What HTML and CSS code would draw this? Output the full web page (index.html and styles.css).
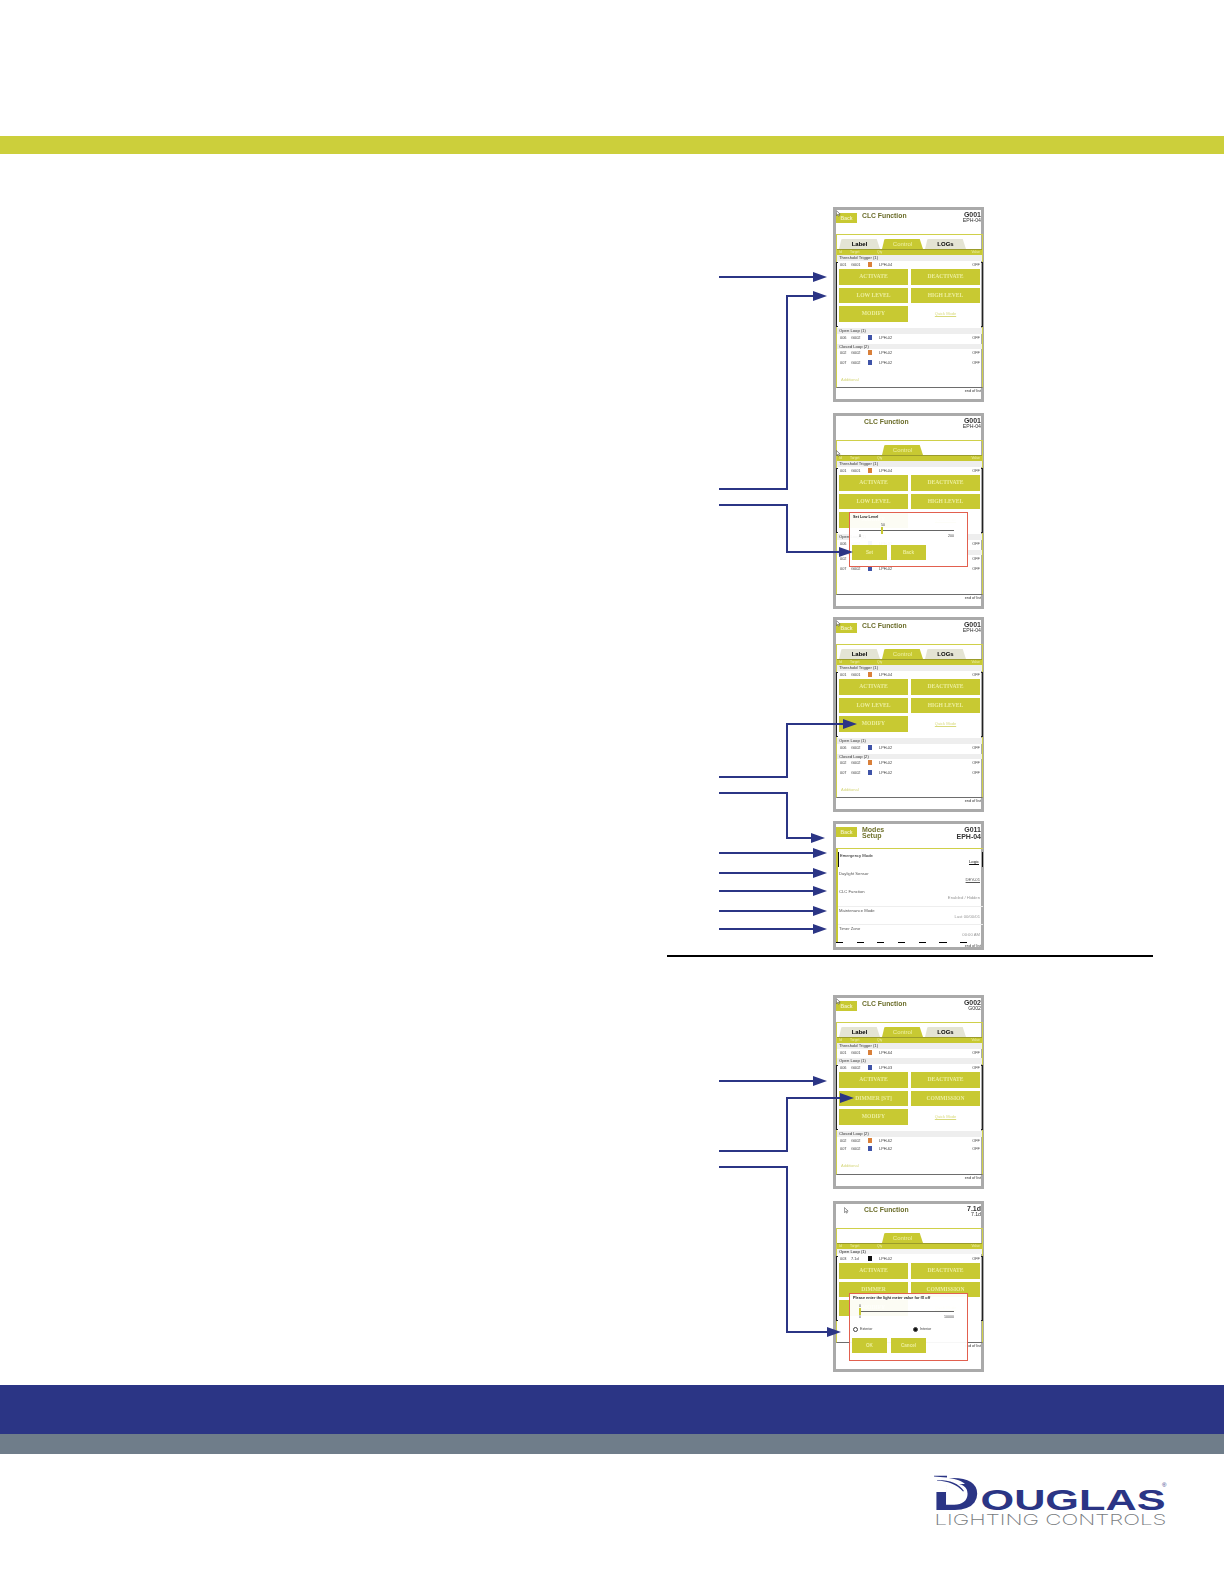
FILE: index.html
```html
<!DOCTYPE html>
<html>

<head>
	<title>CLC Function</title>

	<link rel="stylesheet" href="styles.css">
</head>

<body>
	<div class="page">
		<div class="olive-band"></div>

		<main class="screens">
			<section class="screen screen-first">
				<div class="screen-head">
					<span class="back">Back</span>
					<div class="title">CLC Function</div>
					<div class="device"><b>G001</b><span>EPH-04</span></div>
				</div>
				<div class="screen-body">
					<div class="tabs">
						<span class="tab">Label</span>
						<span class="tab tab-on">Control</span>
						<span class="tab">LOGs</span>
					</div>
					<div class="col-head"><span class="c-id">Id</span><span class="c-target">Target</span><span class="c-qty">Qty</span><span class="c-val">Value</span></div>
					<div class="group">Threshold Trigger (1)</div>
					<div class="selected">
						<div class="row"><span class="c-id">001</span><span class="c-target">G001</span><i class="swatch orange"></i><span class="c-type">LPH-04</span><span class="c-val">OFF</span></div>
						<div class="btn-grid">
							<span class="btn">ACTIVATE</span>
							<span class="btn">DEACTIVATE</span>
							<span class="btn">LOW LEVEL</span>
							<span class="btn">HIGH LEVEL</span>
							<span class="btn">MODIFY</span>
							<span class="link">Quick Mode</span>
						</div>
					</div>
					<div class="group">Open Loop (1)</div>
					<div class="row"><span class="c-id">006</span><span class="c-target">G002</span><i class="swatch blue"></i><span class="c-type">LPH-02</span><span class="c-val">OFF</span></div>
					<div class="group group-gap">Closed Loop (2)</div>
					<div class="row"><span class="c-id">002</span><span class="c-target">G002</span><i class="swatch orange"></i><span class="c-type">LPH-02</span><span class="c-val">OFF</span></div>
					<div class="row row-gap"><span class="c-id">007</span><span class="c-target">G002</span><i class="swatch blue"></i><span class="c-type">LPH-02</span><span class="c-val">OFF</span></div>
					<div class="add">Additional</div>
				</div>
				<div class="screen-foot">end of list</div>
				<svg class="cursor" viewBox="0 0 6 8"><path d="M.5.5v6l1.5-1.3 1 2 1-.5-1-2h2z" /></svg>
			</section>

			<section class="screen screen-second">
				<div class="screen-head">
					<div class="title title-noback">CLC Function</div>
					<div class="device"><b>G001</b><span>EPH-04</span></div>
				</div>
				<div class="screen-body">
					<div class="tabs">
						<span class="tab tab-hide">Label</span>
						<span class="tab tab-on">Control</span>
						<span class="tab tab-hide">LOGs</span>
					</div>
					<div class="col-head"><span class="c-id">Id</span><span class="c-target">Target</span><span class="c-qty">Qty</span><span class="c-val">Value</span></div>
					<div class="group">Threshold Trigger (1)</div>
					<div class="selected">
						<div class="row"><span class="c-id">001</span><span class="c-target">G001</span><i class="swatch orange"></i><span class="c-type">LPH-04</span><span class="c-val">OFF</span></div>
						<div class="btn-grid">
							<span class="btn">ACTIVATE</span>
							<span class="btn">DEACTIVATE</span>
							<span class="btn">LOW LEVEL</span>
							<span class="btn">HIGH LEVEL</span>
							<span class="btn">MODIFY</span>
							<span class="link">Quick Mode</span>
						</div>
					</div>
					<div class="group">Open Loop (1)</div>
					<div class="row"><span class="c-id">006</span><span class="c-target">G002</span><i class="swatch blue"></i><span class="c-type">LPH-02</span><span class="c-val">OFF</span></div>
					<div class="group group-gap">Closed Loop (2)</div>
					<div class="row"><span class="c-id">002</span><span class="c-target">G002</span><i class="swatch orange"></i><span class="c-type">LPH-02</span><span class="c-val">OFF</span></div>
					<div class="row row-gap"><span class="c-id">007</span><span class="c-target">G002</span><i class="swatch blue"></i><span class="c-type">LPH-02</span><span class="c-val">OFF</span></div>
				</div>
				<div class="screen-foot">end of list</div>
				<svg class="cursor cursor-mid" viewBox="0 0 6 8"><path d="M.5.5v6l1.5-1.3 1 2 1-.5-1-2h2z" /></svg>
				<div class="popup popup-low">
					<div class="popup-title">Set Low Level</div>
					<div class="slider">
						<span class="slider-val slider-val-mid">50</span>
						<div class="slider-track"><i class="slider-thumb thumb-mid"></i></div>
						<div class="slider-ends"><span>0</span><span>200</span></div>
					</div>
					<div class="popup-btns"><span class="btn">Set</span><span class="btn">Back</span></div>
				</div>
			</section>

			<section class="screen screen-third">
				<div class="screen-head">
					<span class="back">Back</span>
					<div class="title">CLC Function</div>
					<div class="device"><b>G001</b><span>EPH-04</span></div>
				</div>
				<div class="screen-body">
					<div class="tabs">
						<span class="tab">Label</span>
						<span class="tab tab-on">Control</span>
						<span class="tab">LOGs</span>
					</div>
					<div class="col-head"><span class="c-id">Id</span><span class="c-target">Target</span><span class="c-qty">Qty</span><span class="c-val">Value</span></div>
					<div class="group">Threshold Trigger (1)</div>
					<div class="selected">
						<div class="row"><span class="c-id">001</span><span class="c-target">G001</span><i class="swatch orange"></i><span class="c-type">LPH-04</span><span class="c-val">OFF</span></div>
						<div class="btn-grid">
							<span class="btn">ACTIVATE</span>
							<span class="btn">DEACTIVATE</span>
							<span class="btn">LOW LEVEL</span>
							<span class="btn">HIGH LEVEL</span>
							<span class="btn">MODIFY</span>
							<span class="link">Quick Mode</span>
						</div>
					</div>
					<div class="group">Open Loop (1)</div>
					<div class="row"><span class="c-id">006</span><span class="c-target">G002</span><i class="swatch blue"></i><span class="c-type">LPH-02</span><span class="c-val">OFF</span></div>
					<div class="group group-gap">Closed Loop (2)</div>
					<div class="row"><span class="c-id">002</span><span class="c-target">G002</span><i class="swatch orange"></i><span class="c-type">LPH-02</span><span class="c-val">OFF</span></div>
					<div class="row row-gap"><span class="c-id">007</span><span class="c-target">G002</span><i class="swatch blue"></i><span class="c-type">LPH-02</span><span class="c-val">OFF</span></div>
					<div class="add">Additional</div>
				</div>
				<div class="screen-foot">end of list</div>
				<svg class="cursor" viewBox="0 0 6 8"><path d="M.5.5v6l1.5-1.3 1 2 1-.5-1-2h2z" /></svg>
			</section>

			<section class="screen screen-modes">
				<div class="screen-head">
					<span class="back">Back</span>
					<div class="title title-two">Modes<br>Setup</div>
					<div class="device device-pix"><b>G011</b><b>EPH-04</b></div>
				</div>
				<div class="modes-body">
					<div class="mode mode-on"><span>Emergency Mode</span><em>Logic</em></div>
					<div class="mode"><span>Daylight Sensor</span><em>DEV-01</em></div>
					<div class="mode"><span>CLC Function</span><em class="faint">Enabled / Hidden</em></div>
					<div class="mode mode-line"><span>Maintenance Mode</span><em class="faint">Last 00/00/01</em></div>
					<div class="mode mode-line"><span>Timer Zone</span><em class="faint">00:00 AM</em></div>
				</div>
				<div class="screen-foot foot-dash">end of list</div>
			</section>

			<hr class="rule">

			<section class="screen screen-fifth">
				<div class="screen-head">
					<span class="back">Back</span>
					<div class="title">CLC Function</div>
					<div class="device"><b>G002</b><span>G002</span></div>
				</div>
				<div class="screen-body">
					<div class="tabs">
						<span class="tab">Label</span>
						<span class="tab tab-on">Control</span>
						<span class="tab">LOGs</span>
					</div>
					<div class="col-head"><span class="c-id">Id</span><span class="c-target">Target</span><span class="c-qty">Qty</span><span class="c-val">Value</span></div>
					<div class="group">Threshold Trigger (1)</div>
					<div class="row"><span class="c-id">001</span><span class="c-target">G001</span><i class="swatch orange"></i><span class="c-type">LPH-64</span><span class="c-val">OFF</span></div>
					<div class="group group-open">Open Loop (1)</div>
					<div class="selected">
						<div class="row"><span class="c-id">006</span><span class="c-target">G002</span><i class="swatch blue"></i><span class="c-type">LPH-03</span><span class="c-val">OFF</span></div>
						<div class="btn-grid">
							<span class="btn">ACTIVATE</span>
							<span class="btn">DEACTIVATE</span>
							<span class="btn">DIMMER [ST]</span>
							<span class="btn">COMMISSION</span>
							<span class="btn">MODIFY</span>
							<span class="link">Quick Mode</span>
						</div>
					</div>
					<div class="group">Closed Loop (2)</div>
					<div class="row"><span class="c-id">002</span><span class="c-target">G002</span><i class="swatch orange"></i><span class="c-type">LPH-62</span><span class="c-val">OFF</span></div>
					<div class="row row-gap-small"><span class="c-id">007</span><span class="c-target">G002</span><i class="swatch blue"></i><span class="c-type">LPH-62</span><span class="c-val">OFF</span></div>
					<div class="add">Additional</div>
				</div>
				<div class="screen-foot">end of list</div>
				<svg class="cursor" viewBox="0 0 6 8"><path d="M.5.5v6l1.5-1.3 1 2 1-.5-1-2h2z" /></svg>
			</section>

			<section class="screen screen-sixth">
				<div class="screen-head">
					<div class="title title-noback">CLC Function</div>
					<div class="device"><b>7.1d</b><span>7.1d</span></div>
				</div>
				<div class="screen-body">
					<div class="tabs">
						<span class="tab tab-hide">Label</span>
						<span class="tab tab-on">Control</span>
						<span class="tab tab-hide">LOGs</span>
					</div>
					<div class="col-head"><span class="c-id">Id</span><span class="c-target">Target</span><span class="c-qty">Qty</span><span class="c-val">Value</span></div>
					<div class="group group-plain">Open Loop (1)</div>
					<div class="selected">
						<div class="row"><span class="c-id">003</span><span class="c-target">7.1d</span><i class="swatch black"></i><span class="c-type">LPH-02</span><span class="c-val">OFF</span></div>
						<div class="btn-grid">
							<span class="btn">ACTIVATE</span>
							<span class="btn">DEACTIVATE</span>
							<span class="btn">DIMMER</span>
							<span class="btn">COMMISSION</span>
							<span class="btn">MODIFY</span>
							<span class="link">Quick Mode</span>
						</div>
					</div>
				</div>
				<div class="screen-foot foot-tall">end of list</div>
				<svg class="cursor cursor-off" viewBox="0 0 6 8"><path d="M.5.5v6l1.5-1.3 1 2 1-.5-1-2h2z" /></svg>
				<div class="popup popup-meter">
					<div class="popup-title">Please enter the light meter value for fX off</div>
					<div class="slider">
						<span class="slider-val">0</span>
						<div class="slider-track"><i class="slider-thumb"></i></div>
						<div class="slider-ends"><span>0</span><span>10000</span></div>
					</div>
					<div class="radios">
						<span class="radio"><i class="dot"></i>Exterior</span>
						<span class="radio"><i class="dot dot-on"></i>Interior</span>
					</div>
					<div class="popup-btns"><span class="btn">OK</span><span class="btn">Cancel</span></div>
				</div>
			</section>
		</main>

		<footer class="footer">
			<div class="blue-band"></div>
			<div class="grey-band"></div>
			<div class="logo-wrap">
				<svg class="logo" viewBox="0 -10 236 64">
					<text class="logo-d" x="-1" y="35" textLength="48" lengthAdjust="spacingAndGlyphs">D</text>
					<!-- opens the top of the stem and tapers the top bar into the swoosh -->
					<path fill="#fff" d="M0 -2H13V17H0z" />
					<path fill="#fff" d="M11 2.500C20 3 27 5 32 9L13 9z" />
					<path class="swoosh" d="M1 .8H14V2.600C9 2 5 1.700 1 1.500z" />
					<path class="swoosh" d="M4 5C15 4.500 26 8 31 16L30 16.500C24 9.500 14 6 4 5.600z" />
					<text class="logo-main" x="47.500" y="35" textLength="185" lengthAdjust="spacingAndGlyphs">OUGLAS</text>
					<text class="logo-sub" x="1.500" y="49.500" textLength="232" lengthAdjust="spacingAndGlyphs">LIGHTING CONTROLS</text>
					<text class="logo-reg" x="229" y="12">®</text>
				</svg>
			</div>
		</footer>

		<!-- callout arrows, page coordinates -->
		<svg class="arrows" viewBox="0 0 1224 1584">
			<defs>
				<marker id="head" markerUnits="userSpaceOnUse" markerWidth="14" markerHeight="10" refX="0" refY="5" orient="auto">
					<path d="M0 0L14 5L0 10z" fill="#2b3585" />
				</marker>
			</defs>
			<path d="M719 277H813" />
			<path d="M719 489H787V296H813" />
			<path d="M719 505H787V552H839" />
			<path d="M719 777H787V724H843" />
			<path d="M719 793H787V838H811" />
			<path d="M719 853H813" />
			<path d="M719 873H813" />
			<path d="M719 891H813" />
			<path d="M719 911H813" />
			<path d="M719 929H813" />
			<path d="M719 1081H813" />
			<path d="M719 1151H787V1098H840" />
			<path d="M719 1167H787V1332H827" />
		</svg>
	</div>
</body>

</html>
```

FILE: styles.css
```css
body {
	margin: 0px;
	background: white;
	font-family: "Liberation Sans", Arial, sans-serif;
}

.page {
	position: relative;
	width: 1224px;
	height: 1584px;
	overflow: hidden;
}

.olive-band {
	height: 18px;
	margin-top: 136px;
	background: #cccf3b;
}

.screens {
	padding: 53px 0 0 667px;
	height: 1178px;
}

.screen {
	position: relative;
	display: flex;
	flex-direction: column;
	box-sizing: border-box;
	width: 151px;
	margin-left: 166px;
	border: 3px solid #aaaaaa;
	background: white;
	filter: blur(0.4px);
}

.screen-first {
	height: 195px;
}

.screen-second {
	height: 196px;
	margin-top: 11px;
}

.screen-third {
	height: 195px;
	margin-top: 8px;
}

.screen-modes {
	height: 129px;
	margin-top: 9px;
}

.screen-fifth {
	height: 194px;
	margin-top: 38px;
}

.screen-sixth {
	height: 171px;
	margin-top: 12px;
}

.rule {
	width: 486px;
	height: 2px;
	margin: 5px 0 0 0;
	border: none;
	background: black;
}

/* screen header */
.screen-head {
	position: relative;
	display: flex;
	flex: none;
	height: 24px;
	box-sizing: border-box;
	padding: 3px 0 0 0;
}

.back {
	width: 21px;
	height: 10px;
	background: #c8c932;
	color: #f1f1c0;
	font-size: 5px;
	font-weight: bold;
	line-height: 10px;
	text-align: center;
}

.title {
	margin: -1.5px 0 0 5px;
	color: #6b6d2a;
	font-size: 6.8px;
	font-weight: bold;
	line-height: 8px;
	white-space: nowrap;
}

.title-noback {
	margin-left: 28px;
}

.title-two {
	margin-top: 0;
	color: #70722c;
	font-size: 7px;
	line-height: 5.5px;
}

.device {
	display: flex;
	flex-direction: column;
	margin: -2px 0 0 auto;
	color: #333;
	font-size: 5.2px;
	line-height: 4.5px;
	text-align: right;
}

.device b {
	font-size: 7px;
	line-height: 5.5px;
	margin-top: 1px;
}

.device-pix {
	margin-top: -1px;
}

/* screen body */
.screen-body {
	flex: 1;
	box-sizing: border-box;
	margin: 0 -2px 0 0;
	padding-top: 4px;
	border: 1px solid #cfd04a;
	border-bottom: 1px solid #6d6d6d;
}

.tabs {
	display: flex;
	height: 10px;
	padding-left: 2px;
	gap: 2px;
}

.tab {
	width: 41px;
	background: #e4e4d4;
	clip-path: polygon(6% 0, 92% 0, 100% 100%, 0 100%);
	border-radius: 4px 0 0 0;
	font-size: 6px;
	font-weight: bold;
	line-height: 11px;
	text-align: center;
}

.tab-on {
	background: #c8c932;
	color: #eef0a6;
	font-weight: normal;
}

.tab-hide {
	visibility: hidden;
}

.col-head {
	display: flex;
	height: 6px;
	box-sizing: border-box;
	padding: 0 2px;
	border-top: 1px solid #9b9c2a;
	background: #c8c932;
	color: #ecedaa;
	font-size: 3.4px;
	line-height: 5px;
}

.group {
	height: 5.5px;
	margin-top: 1px;
	padding-left: 2px;
	background: #eeeeee;
	color: #333;
	font-size: 4.2px;
	line-height: 5.5px;
}

.col-head + .group {
	margin-top: 0;
}

.group-gap {
	margin-top: 4px;
}

.group-open {
	margin-top: 3.5px;
}

.group-plain {
	height: 5px;
	margin-bottom: 1.5px;
	background: #f4f4f4;
	color: #111;
}

.row {
	display: flex;
	align-items: center;
	height: 5px;
	margin-top: 1px;
	padding: 0 2px 0 3px;
	color: #444;
	font-size: 3.9px;
}

.row-gap {
	margin-top: 5px;
}

.row-gap-small {
	margin-top: 3px;
}

.c-id {
	width: 11px;
}

.c-target {
	width: 17px;
}

.c-qty {
	margin-left: 10px;
}

.c-type {
	margin-left: 7px;
}

.c-val {
	margin-left: auto;
}

.swatch {
	width: 4px;
	height: 5px;
}

.orange {
	background: #d9803a;
}

.blue {
	background: #3f53a8;
}

.black {
	background: #111;
}

.selected {
	position: relative;
	margin: 0 -1px;
	padding-bottom: 5.5px;
	border-left: 1px solid #222;
	border-right: 1px solid #222;
}

.selected::before,
.selected::after {
	content: "";
	position: absolute;
	left: -1px;
	right: -1px;
	height: 1px;
	border-left: 2px solid #222;
	border-right: 2px solid #222;
}

.selected::before {
	top: 0;
}

.selected::after {
	bottom: 0;
}

.btn-grid {
	display: grid;
	grid-template-columns: 69px 69px;
	grid-auto-rows: 15.5px;
	gap: 3px;
	margin: 2.5px 0 0 2px;
}

.btn {
	background: #c8c932;
	color: #ecee9e;
	font-family: "Liberation Serif", serif;
	font-size: 5.6px;
	font-weight: bold;
	line-height: 15.5px;
	text-align: center;
}

.link {
	color: #d9da7c;
	font-size: 4px;
	line-height: 15.5px;
	text-align: center;
	text-decoration: underline;
}

.add {
	margin: 12px 0 0 4px;
	color: #d5d67a;
	font-size: 4px;
}

.screen-foot {
	flex: none;
	height: 11px;
	color: #333;
	font-size: 3.8px;
	line-height: 6px;
	text-align: right;
}

.foot-tall {
	height: 26px;
}

/* modes screen */
.modes-body {
	flex: 1;
	box-sizing: border-box;
	margin-right: -2px;
	padding-top: 3px;
	border-top: 1px solid #cfd04a;
	border-left: 2px solid #c8c932;
}

.mode {
	display: flex;
	flex-direction: column;
	height: 18px;
	box-sizing: border-box;
	padding: 1px 3px 0 1px;
	color: #555;
	font-size: 4.2px;
	line-height: 5px;
}

.mode em {
	align-self: flex-end;
	margin-top: 1px;
	font-style: normal;
	text-decoration: underline;
}

.mode em.faint {
	color: #999;
	text-decoration: none;
}

.mode-on {
	height: 15px;
	margin-bottom: 3px;
	border-left: 1px solid #111;
	border-right: 1px solid #111;
	color: #111;
}

.mode-on em {
	color: #111;
}

.mode-line {
	border-top: 1px solid #eee;
}

.foot-dash {
	height: 12px;
	padding-top: 1px;
	background: repeating-linear-gradient(90deg, #000 0 7px, transparent 7px 20.7px) 0 0 / 100% 1px no-repeat;
	color: #444;
}

/* popups */
.popup {
	position: absolute;
	left: 13px;
	box-sizing: border-box;
	width: 119px;
	padding: 2px 2px;
	border: 1px solid #e2604f;
	background: rgba(255, 255, 255, 0.95);
}

.popup-low {
	top: 96px;
	height: 55px;
}

.popup-meter {
	top: 89px;
	height: 68px;
}

.popup-title {
	padding-left: 1px;
	color: #222;
	font-size: 3.8px;
	font-weight: bold;
	line-height: 5px;
}

.slider {
	position: relative;
	height: 17px;
	margin: 3px 11px 0 7px;
	color: #444;
	font-size: 3.6px;
}

.slider-val {
	display: block;
	height: 5px;
	line-height: 5px;
}

.slider-val-mid {
	margin-left: 22px;
}

.slider-track {
	position: relative;
	height: 1px;
	margin-top: 2px;
	background: #666;
}

.slider-thumb {
	position: absolute;
	left: 0;
	top: -3px;
	width: 2px;
	height: 7px;
	background: #c8c932;
}

.thumb-mid {
	left: 22px;
}

.slider-ends {
	display: flex;
	justify-content: space-between;
	margin-top: 3px;
	line-height: 4px;
}

.radios {
	display: flex;
	gap: 46px;
	height: 7px;
	margin: 5px 0 0 1px;
	color: #444;
	font-size: 3.6px;
	line-height: 7px;
}

.radio {
	display: flex;
	align-items: center;
	gap: 2px;
	width: 14px;
}

.dot {
	flex: none;
	width: 3px;
	height: 3px;
	border: 0.5px solid #444;
	border-radius: 50%;
}

.dot-on {
	background: #111;
}

.popup-btns {
	display: flex;
	gap: 4px;
	margin-top: 5px;
}

.popup-btns .btn {
	width: 35px;
	height: 15px;
	font-family: "Liberation Sans", Arial, sans-serif;
	font-size: 4.6px;
	line-height: 15px;
}

.cursor {
	position: absolute;
	left: 0;
	top: 0;
	width: 5px;
	height: 7px;
}

.cursor path {
	fill: white;
	stroke: #333;
	stroke-width: 0.6;
}

.cursor-off {
	left: 8px;
	top: 3px;
}

.cursor-mid {
	top: 34px;
}

/* footer */
.blue-band {
	height: 49px;
	background: #2b3585;
}

.grey-band {
	height: 20px;
	background: #6f7d8a;
}

.logo-wrap {
	display: flex;
	justify-content: flex-end;
	padding: 11px 55px 0 0;
}

.logo {
	width: 236px;
	height: 64px;
}

.logo-d,
.logo-main {
	fill: #2b3585;
	font-family: "Liberation Sans", Arial, sans-serif;
	font-weight: bold;
}

.logo-d {
	font-size: 47px;
}

.logo-main {
	font-size: 30px;
}

.logo-sub {
	fill: #777b80;
	font-family: Inter, Lato, sans-serif;
	font-size: 15px;
	font-weight: 200;
}

.logo-reg {
	fill: #2b3585;
	font-size: 6px;
}

.swoosh {
	fill: #2b3585;
}

/* arrows */
.arrows {
	position: absolute;
	top: 0;
	left: 0;
	width: 1224px;
	height: 1584px;
	pointer-events: none;
}

.arrows path {
	fill: none;
	stroke: #2b3585;
	stroke-width: 2;
	marker-end: url(#head);
}

.arrows marker path {
	fill: #2b3585;
	stroke: none;
}
```
